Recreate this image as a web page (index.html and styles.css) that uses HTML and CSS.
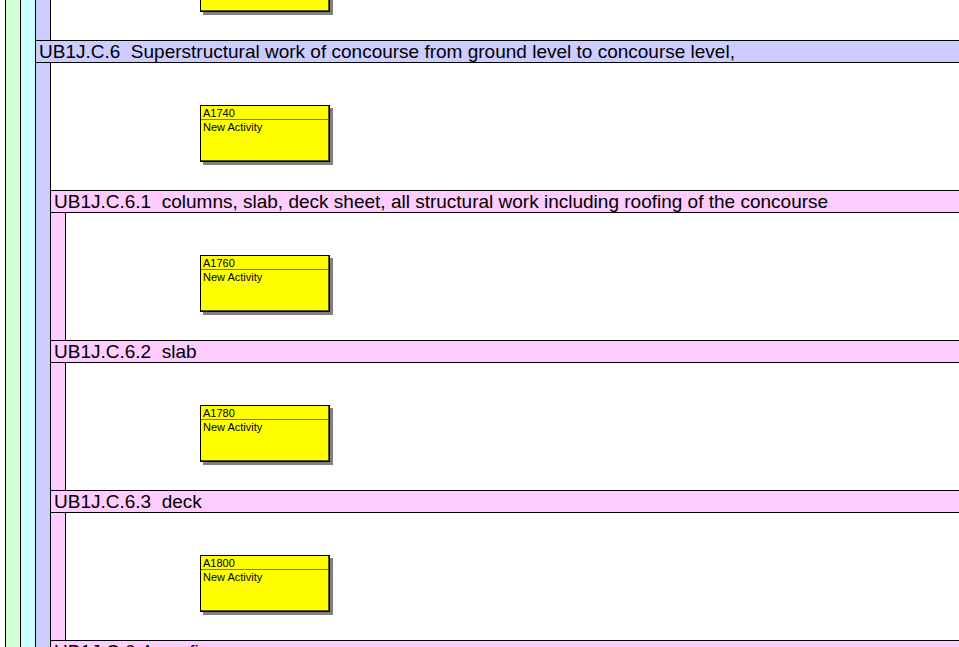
FILE: index.html
```html
<!DOCTYPE html>
<html>
<head>
<meta charset="utf-8">
<link rel="stylesheet" href="styles.css">
</head>
<body>
<div class="chart">
  <div class="lane l1">
    <div class="lane-inner">
      <div class="lane l2">
        <div class="lane-inner">

          <div class="lane l3 lead">
            <div class="lane-inner">
              <div class="acts acts-3">
                <div class="act"><div class="act-id">A1720</div><div class="act-name">New Activity</div></div>
              </div>
            </div>
          </div>

          <div class="grp g3">
            <div class="hdr">UB1J.C.6  Superstructural work of concourse from ground level to concourse level,</div>
            <div class="lane l3">
              <div class="lane-inner">
                <div class="acts acts-3">
                  <div class="act"><div class="act-id">A1740</div><div class="act-name">New Activity</div></div>
                </div>

                <div class="grp g4">
                  <div class="hdr">UB1J.C.6.1  columns, slab, deck sheet, all structural work including roofing of the concourse</div>
                  <div class="lane l4">
                    <div class="lane-inner">
                      <div class="acts acts-4">
                        <div class="act"><div class="act-id">A1760</div><div class="act-name">New Activity</div></div>
                      </div>
                    </div>
                  </div>
                </div>

                <div class="grp g4">
                  <div class="hdr">UB1J.C.6.2  slab</div>
                  <div class="lane l4">
                    <div class="lane-inner">
                      <div class="acts acts-4">
                        <div class="act"><div class="act-id">A1780</div><div class="act-name">New Activity</div></div>
                      </div>
                    </div>
                  </div>
                </div>

                <div class="grp g4">
                  <div class="hdr">UB1J.C.6.3  deck</div>
                  <div class="lane l4">
                    <div class="lane-inner">
                      <div class="acts acts-4">
                        <div class="act"><div class="act-id">A1800</div><div class="act-name">New Activity</div></div>
                      </div>
                    </div>
                  </div>
                </div>

                <div class="grp g4">
                  <div class="hdr">UB1J.C.6.4  roofing</div>
                  <div class="lane l4">
                    <div class="lane-inner">
                      <div class="acts acts-4"></div>
                    </div>
                  </div>
                </div>

              </div>
            </div>
          </div>

        </div>
      </div>
    </div>
  </div>
</div>
</body>
</html>
```

FILE: styles.css
```css
html, body {
  margin: 0;
  padding: 0;
  height: 647px;
  overflow: hidden;
  background: #ffffff;
}

body {
  font-family: "Liberation Sans", Arial, sans-serif;
  color: #000000;
}

.chart {
  padding-left: 5px;
}

.lane {
  padding-left: 14px;
}

.lane-inner {
  border-left: 1px solid #000000;
  background: #ffffff;
}

.l1 {
  border-left: 1px solid #000000;
  background: #d4ffd4;
}

.l2 {
  background: #ccffff;
}

.l3 {
  background: #ccccff;
}

.l4 {
  background: #ffccff;
}

.lead {
  margin-top: -87px;
}

.hdr {
  height: 21px;
  line-height: 22px;
  border-top: 1px solid #000000;
  border-bottom: 1px solid #000000;
  font-size: 19px;
  padding-left: 3px;
  white-space: pre;
  overflow: hidden;
}

.g3 > .hdr {
  background: #ccccff;
}

.g4 > .hdr {
  background: #ffccff;
}

.acts {
  height: 127px;
  box-sizing: border-box;
  padding-top: 42px;
}

.acts-3 {
  padding-left: 149px;
}

.acts-4 {
  padding-left: 134px;
}

.act {
  width: 128px;
  height: 55px;
  border: 1px solid #000000;
  background: #ffff00;
  box-shadow: inset -1px -1px 0 #5a5a00, 3px 3px 0 #808080;
  font-size: 11px;
}

.act-id {
  height: 13px;
  line-height: 15px;
  padding-left: 2px;
  border-bottom: 1px solid #808000;
}

.act-name {
  line-height: 15px;
  padding-left: 2px;
}
```
